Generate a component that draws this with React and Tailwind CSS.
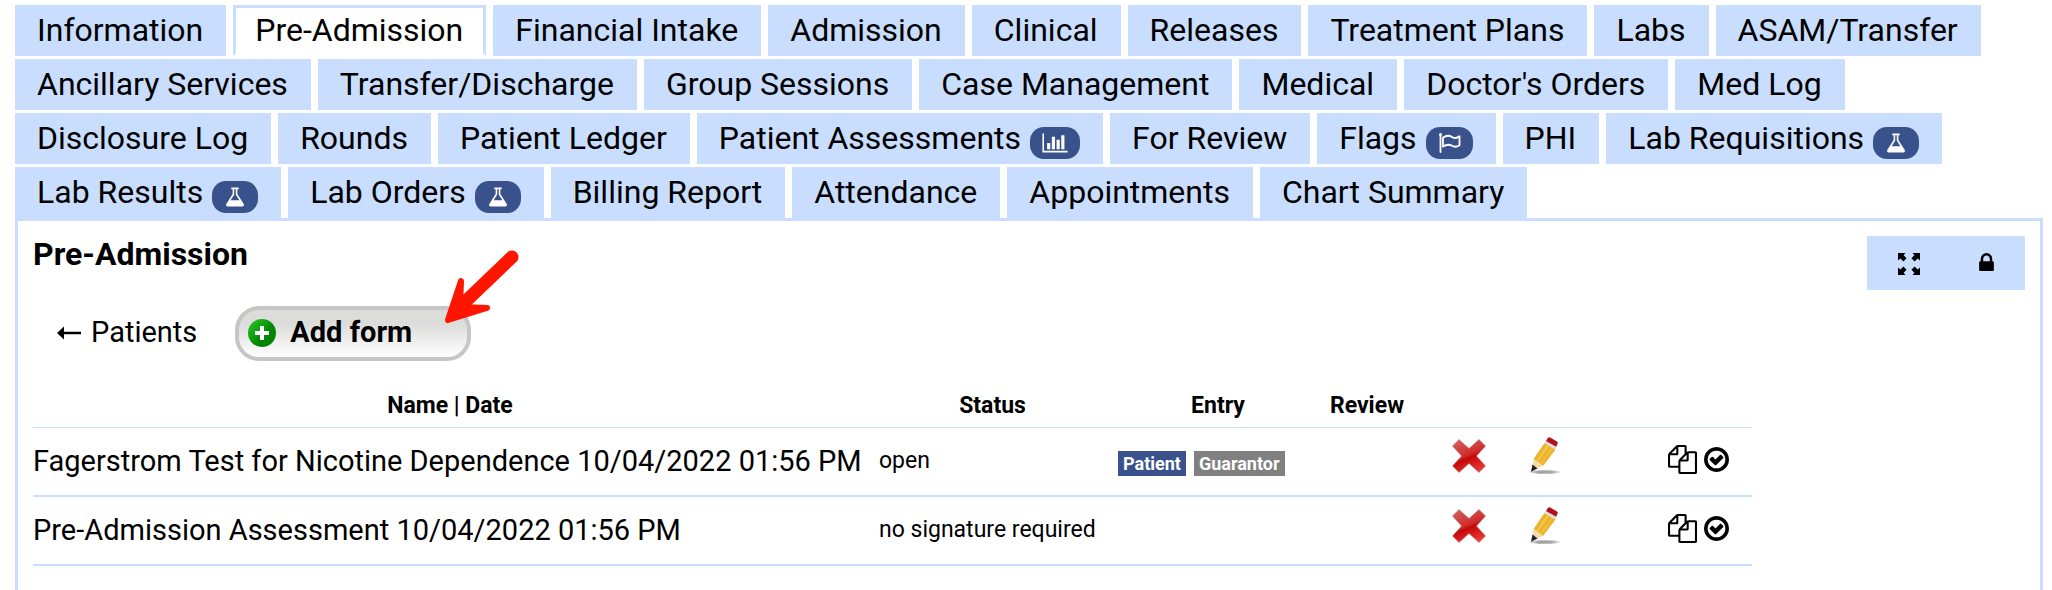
import clsx from 'clsx';

const FLASK = {
  viewBox: '0 0 1792 1792',
  d: 'M1591 1448q56 89 21.5 152.5t-140.5 63.5h-1152q-106 0-140.5-63.5t21.5-152.5l503-793v-399h-64q-26 0-45-19t-19-45 19-45 45-19h512q26 0 45 19t19 45-19 45-45 19h-64v399zm-779-725l-272 429h712l-272-429-20-31v-436h-128v436z',
};
const BAR_CHART = {
  viewBox: '0 0 2048 1792',
  d: 'M640 896v512h-256v-512h256zm384-512v1024h-256v-1024h256zm1024 1152v128h-2048v-1536h128v1408h1920zm-640-896v768h-256v-768h256zm384-384v1152h-256v-1152h256z',
};
const COPY = {
  viewBox: '0 0 1792 1792',
  d: 'M1696 384q40 0 68 28t28 68v1216q0 40-28 68t-68 28h-960q-40 0-68-28t-28-68v-288h-544q-40 0-68-28t-28-68v-672q0-40 20-88t48-76l408-408q28-28 76-48t88-20h416q40 0 68 28t28 68v328q68-40 128-40h416zm-544 213l-299 299h299v-299zm-640-384l-299 299h299v-299zm196 647l316-316v-416h-384v416q0 40-28 68t-68 28h-416v640h512v-256q0-40 20-88t48-76zm956 804v-1152h-384v416q0 40-28 68t-68 28h-416v640h896z',
};
const CHECK_CIRCLE = {
  viewBox: '128 128 1536 1536',
  d: 'M1299 813l-422 422q-19 19-45 19t-45-19l-294-294q-19-19-19-45t19-45l102-102q19-19 45-19t45 19l147 147 275-275q19-19 45-19t45 19l102 102q19 19 19 45t-19 45zm141 83q0-148-73-273t-198-198-273-73-273 73-198 198-73 273 73 273 198 198 273 73 273-73 198-198 73-273zm224 0q0 209-103 385.5t-279.5 279.5-385.5 103-385.5-103-279.5-279.5-103-385.5 103-385.5 279.5-279.5 385.5-103 385.5 103 279.5 279.5 103 385.5z',
};
const LOCK = {
  viewBox: '320 128 1152 1408',
  d: 'M640 768h512v-192q0-106-75-181t-181-75-181 75-75 181v192zm832 96v576q0 40-28 68t-68 28h-960q-40 0-68-28t-28-68v-576q0-40 28-68t68-28h32v-192q0-184 132-316t316-132 316 132 132 316v192h32q40 0 68 28t28 68z',
};

const TABS = [
  { label: 'Information' },
  { label: 'Pre-Admission', active: true },
  { label: 'Financial Intake' },
  { label: 'Admission' },
  { label: 'Clinical' },
  { label: 'Releases' },
  { label: 'Treatment Plans' },
  { label: 'Labs' },
  { label: 'ASAM/Transfer' },
  { label: 'Ancillary Services' },
  { label: 'Transfer/Discharge' },
  { label: 'Group Sessions' },
  { label: 'Case Management' },
  { label: 'Medical' },
  { label: "Doctor's Orders" },
  { label: 'Med Log' },
  { label: 'Disclosure Log' },
  { label: 'Rounds' },
  { label: 'Patient Ledger' },
  { label: 'Patient Assessments', icon: <Glyph icon={BAR_CHART} className="h-[22px] w-[26px]" /> },
  { label: 'For Review' },
  { label: 'Flags', icon: <FlagIcon /> },
  { label: 'PHI' },
  { label: 'Lab Requisitions', icon: <Glyph icon={FLASK} className="h-6 w-[22px]" /> },
  { label: 'Lab Results', icon: <Glyph icon={FLASK} className="h-6 w-[22px]" /> },
  { label: 'Lab Orders', icon: <Glyph icon={FLASK} className="h-6 w-[22px]" /> },
  { label: 'Billing Report' },
  { label: 'Attendance' },
  { label: 'Appointments' },
  { label: 'Chart Summary' },
];

const FORMS = [
  {
    name: 'Fagerstrom Test for Nicotine Dependence 10/04/2022 01:56 PM',
    status: 'open',
    entry: true,
  },
  {
    name: 'Pre-Admission Assessment 10/04/2022 01:56 PM',
    status: 'no signature required',
    entry: false,
  },
];

function Glyph({ icon, className }) {
  return (
    <svg viewBox={icon.viewBox} className={className} fill="currentColor" fillRule="evenodd" aria-hidden="true">
      <path d={icon.d} />
    </svg>
  );
}

function FlagIcon() {
  return (
    <svg
      viewBox="0 0 23 22"
      className="h-[22px] w-[23px]"
      fill="none"
      stroke="currentColor"
      strokeLinecap="round"
      strokeLinejoin="round"
      aria-hidden="true"
    >
      <path d="M2.500 3v17" strokeWidth="1.800" />
      <circle cx="2.500" cy="2.500" r="1.500" fill="currentColor" stroke="none" />
      <path d="M5 5.500c3-2 6-2.500 9-.600s5.500 1 7.500-.6v9c-2.500 1.700-5 2-7.500.500s-6-1.200-9 .700z" strokeWidth="1.800" />
    </svg>
  );
}

function Tab({ label, active, icon }) {
  return (
    <a
      href="#"
      aria-current={active ? 'page' : undefined}
      className={clsx(
        'flex h-[51px] items-center border-x-3 border-t-3 border-[#c9deff] pr-5 pl-[19px] whitespace-nowrap',
        active ? 'border-b-3 border-b-transparent bg-white pb-[2px]' : 'bg-[#c9deff] pb-[5px]'
      )}
    >
      {label}
      {icon && (
        <span className="mt-[11px] ml-[9px] flex h-8 items-center rounded-[14px] bg-[#39528c] px-3 text-white">
          {icon}
        </span>
      )}
    </a>
  );
}

function FullscreenIcon() {
  return (
    <svg viewBox="0 0 22 22" className="h-[22px] w-[22px]" fill="currentColor" aria-hidden="true">
      <path d="M0 0h7.500L5.600 2.200 8.600 5.200 5.400 8.400 2.400 5.400 0 7.500z" />
      <path d="M22 0h-7.500l1.900 2.200-3 3 3.200 3.200 3-3L22 7.500z" />
      <path d="M0 22h7.500l-1.900-2.200 3-3-3.200-3.200-3 3L0 14.500z" />
      <path d="M22 22h-7.500l1.900-2.200-3-3 3.200-3.200 3 3 2.400-2.100z" />
    </svg>
  );
}

function BackArrow() {
  return (
    <svg viewBox="0 0 24 14" className="h-[14px] w-6" aria-hidden="true">
      <path d="M5 7h19" stroke="currentColor" strokeWidth="2.500" />
      <path d="M0 7 7 .500v13z" fill="currentColor" />
    </svg>
  );
}

function PlusIcon() {
  return (
    <svg viewBox="0 0 28 28" className="h-7 w-7" aria-hidden="true">
      <defs>
        <linearGradient id="plus-fill" x1="0" y1="0" x2="1" y2="1">
          <stop offset="0" stopColor="#2fc42f" />
          <stop offset="0.45" stopColor="#0a9a0a" />
          <stop offset="0.55" stopColor="#058605" />
          <stop offset="1" stopColor="#008200" />
        </linearGradient>
      </defs>
      <circle cx="14" cy="14" r="14" fill="url(#plus-fill)" />
      <path d="M14 7v14M7 14h14" stroke="#fff" strokeWidth="4" />
    </svg>
  );
}

function DeleteIcon() {
  return (
    <svg viewBox="0 0 34 34" className="h-[34px] w-[34px]" aria-hidden="true">
      <defs>
        <linearGradient id="delete-fill" x1="0.3" y1="0" x2="0.7" y2="1">
          <stop offset="0" stopColor="#d45a5a" />
          <stop offset="0.45" stopColor="#cf2c2c" />
          <stop offset="0.55" stopColor="#c40808" />
          <stop offset="1" stopColor="#f03a3a" />
        </linearGradient>
      </defs>
      <path
        d="M7 .500 17 9.500 27 .500 33.500 7 24.500 17 33.500 27 27 33.500 17 24.500 7 33.500 .500 27 9.500 17 .500 7z"
        fill="url(#delete-fill)"
        stroke="#b98080"
        strokeWidth="0.6"
      />
    </svg>
  );
}

function PencilIcon() {
  return (
    <svg viewBox="0 0 34 38" className="h-[38px] w-[34px]" aria-hidden="true">
      <defs>
        <linearGradient id="pencil-shadow">
          <stop offset="0" stopColor="#999" stopOpacity="0.2" />
          <stop offset="0.3" stopColor="#a0a0a0" />
          <stop offset="0.7" stopColor="#a8a8a8" />
          <stop offset="1" stopColor="#999" stopOpacity="0.1" />
        </linearGradient>
      </defs>
      <ellipse cx="17" cy="35" rx="16" ry="1.800" fill="url(#pencil-shadow)" />
      <path d="M5.500 22 16.500 6 27.500 12.500 15 29z" fill="#ecb32b" />
      <path d="M9 24.500 20 8.500" stroke="#f5c84e" strokeWidth="2" />
      <path d="M12.500 27 24.500 11" stroke="#f1c040" strokeWidth="1.500" />
      <path d="M5.500 22 15 29 3.500 34z" fill="#f3dcae" />
      <path d="M4.500 27.500 9.500 31.500 3 34.800z" fill="#222" />
      <path d="M16.500 6 18 3.500 28.700 10 27.500 12.500z" fill="#dedede" />
      <path d="M18 4 20 .800q.8-1 2.200-.3L29 4.500q1.200.9.500 2.200L28.200 9.800z" fill="#b3121c" />
    </svg>
  );
}

function PointerArrow() {
  return (
    <svg
      viewBox="0 0 76 78"
      className="pointer-events-none absolute -top-14 left-[209px] h-[78px] w-[76px]"
      fill="none"
      stroke="#ff1500"
      strokeLinecap="round"
      strokeLinejoin="round"
      aria-hidden="true"
    >
      <path d="M68 7 22 51" strokeWidth="13" />
      <path d="M4 70 17 31 16 57 43 58z" fill="#ff1500" strokeWidth="6" />
    </svg>
  );
}

function Toolbar() {
  return (
    <div className="flex h-[54px] w-[158px] items-center bg-[#c9deff] pt-px pl-[3px]">
      <button type="button" aria-label="Full screen" className="flex flex-1 justify-center">
        <FullscreenIcon />
      </button>
      <button type="button" aria-label="Lock" className="flex flex-1 justify-center pb-1">
        <Glyph icon={LOCK} className="h-[18px] w-[15px]" />
      </button>
    </div>
  );
}

function FormRow({ name, status, entry }) {
  return (
    <tr className="h-[69px] border-b-2 border-[#c9deff]">
      <td className="text-[29px] whitespace-nowrap">{name}</td>
      <td className="pl-3 text-[23px] whitespace-nowrap">{status}</td>
      <td>
        {entry && (
          <div className="flex gap-2 pt-1 text-[18px] leading-[25px] font-bold text-white">
            <span className="bg-[#39528c] px-[5px]">Patient</span>
            <span className="bg-[#808080] px-[5px]">Guarantor</span>
          </div>
        )}
      </td>
      <td />
      <td className="pb-[10px]">
        <button type="button" aria-label="Delete form" className="block">
          <DeleteIcon />
        </button>
      </td>
      <td className="pb-[10px]">
        <button type="button" aria-label="Edit form" className="block">
          <PencilIcon />
        </button>
      </td>
      <td className="pb-1">
        <div className="flex items-center justify-end gap-[7px] pr-[23px]">
          <button type="button" aria-label="Copy form">
            <Glyph icon={COPY} className="h-[29px] w-[29px]" />
          </button>
          <button type="button" aria-label="Mark complete">
            <Glyph icon={CHECK_CIRCLE} className="h-[25px] w-[25px]" />
          </button>
        </div>
      </td>
    </tr>
  );
}

export default function App() {
  return (
    <div className="flex min-h-screen flex-col bg-white pt-[5px] pr-[9px] pl-[15px] font-[Roboto,sans-serif] text-black">
      <nav className="flex flex-wrap gap-x-[7px] gap-y-[3px] text-[32px]">
        {TABS.map((tab) => (
          <Tab key={tab.label} {...tab} />
        ))}
      </nav>

      <main className="flex-1 border-x-3 border-t-3 border-[#c9deff] px-[15px] pt-[15px]">
        <div className="flex items-start justify-between">
          <h1 className="text-[32px] leading-9 font-bold">Pre-Admission</h1>
          <Toolbar />
        </div>

        <div className="mt-4 flex items-center pl-6 text-[29px]">
          <a href="#" className="flex items-center gap-[10px] pb-[2px]">
            <BackArrow />
            Patients
          </a>
          <div className="relative ml-[38px]">
            <button
              type="button"
              className="flex h-[55px] w-[236px] items-center gap-[14px] rounded-[24px] border-4 border-[#c6c6c6] bg-linear-to-b from-[#dcdcdb] from-30% to-white pb-[2px] pl-[9px] font-bold"
            >
              <PlusIcon />
              Add form
            </button>
            <PointerArrow />
          </div>
        </div>

        <div className="mt-6 mr-[273px]">
          <table className="w-full table-fixed border-collapse">
            <colgroup>
              <col />
              <col className="w-[251px]" />
              <col className="w-[200px]" />
              <col className="w-[134px]" />
              <col className="w-[76px]" />
              <col className="w-[90px]" />
              <col className="w-[134px]" />
            </colgroup>
            <thead>
              <tr className="h-[42px] border-b border-[#c9deff] text-[23px]">
                <th>Name | Date</th>
                <th>Status</th>
                <th>Entry</th>
                <th className="pr-9">Review</th>
                <td />
                <td />
                <td />
              </tr>
            </thead>
            <tbody>
              {FORMS.map((form) => (
                <FormRow key={form.name} {...form} />
              ))}
            </tbody>
          </table>
        </div>
      </main>
    </div>
  );
}
